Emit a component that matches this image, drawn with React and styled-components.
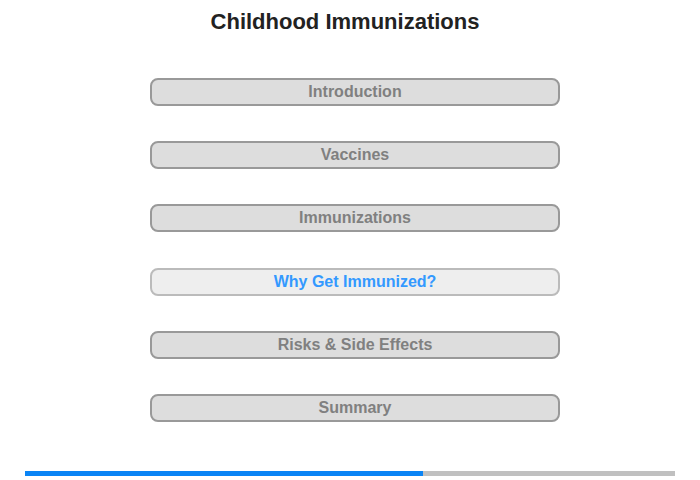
import React from 'react';
import styled, { createGlobalStyle } from 'styled-components';


const GlobalStyle = createGlobalStyle`
    body {
        margin: 0;
        background: #FFFFFF;
        font-family: 'Liberation Sans', Arial, sans-serif;
    }
`;

const Page = styled.div`
    width: 700px;
    height: 480px;
    display: flex;
    flex-direction: column;
    align-items: center;
`;

const Title = styled.h1`
    margin: 10px 10px 0 0;
    font-size: 22px;
    line-height: 24px;
    font-weight: 700;
    color: #222222;
`;

const MenuList = styled.div`
    margin: 44px 0 0 10px;
    display: flex;
    flex-direction: column;
    gap: 35.2px;
`;

const MenuButton = styled.div`
    box-sizing: border-box;
    width: 410px;
    height: 28px;
    border: 2px solid ${(props) => (props.$active ? '#BBBBBB' : '#999999')};
    border-radius: 8px;
    background: ${(props) => (props.$active ? '#EEEEEE' : '#DDDDDD')};
    color: ${(props) => (props.$active ? '#3399FF' : '#808080')};
    font-size: 16px;
    font-weight: 700;
    line-height: 24px;
    text-align: center;
    cursor: pointer;
`;

const Progress = styled.div`
    margin-top: 49px;
    width: 650px;
    height: 5px;
    display: flex;
    background: #C0C0C0;
`;

const ProgressFill = styled.div`
    height: 100%;
    background: #0A84F5;
`;

const SECTIONS = [
    'Introduction',
    'Vaccines',
    'Immunizations',
    'Why Get Immunized?',
    'Risks & Side Effects',
    'Summary',
];

const ACTIVE_SECTION = 3;

const App = () => {
    const progress = 398 / 650;

    return (
        <Page>
            <GlobalStyle/>
            <Title>Childhood Immunizations</Title>
            <MenuList>
                {SECTIONS.map((name, index) => (
                    <MenuButton key={name} $active={index === ACTIVE_SECTION}>
                        {name}
                    </MenuButton>
                ))}
            </MenuList>
            <Progress>
                <ProgressFill style={{ width: `${progress * 100}%` }}/>
            </Progress>
        </Page>
    );
};

export default App;
